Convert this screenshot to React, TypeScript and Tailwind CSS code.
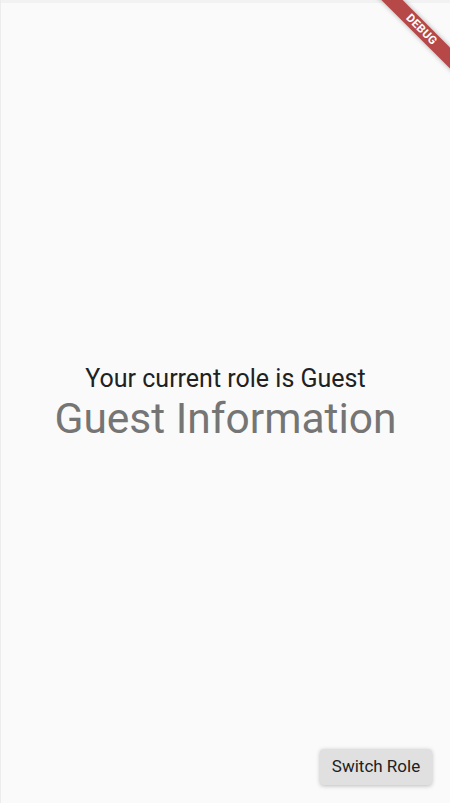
import React from "react";

export default function App() {
  return (
    <div
      className="relative w-[450px] h-[803px] overflow-hidden bg-[#fafafa] border-l border-[#ececec]"
      style={{ fontFamily: "Roboto, 'Noto Sans', sans-serif" }}
    >
      <div className="h-[3px] bg-[#f2f2f2]" />
      <div className="flex h-[800px] flex-col items-center justify-center">
        <div className="text-[25px] leading-[30px] text-[#212121]">Your current role is Guest</div>
        <div className="text-[42.5px] leading-[49px] text-[#757575]">Guest Information</div>
      </div>

      <button className="absolute right-[18px] bottom-[18px] h-[36px] w-[112px] rounded-[4px] bg-[#e0e0e0] text-[17px] text-[#212121] shadow-[0_1px_4px_rgba(0,0,0,0.25)]">
        Switch Role
      </button>

      <div className="absolute left-[360px] top-[21.5px] flex h-[15px] w-[121px] rotate-45 items-center justify-center bg-[#b74848] shadow-[0_0_5px_rgba(0,0,0,0.3)]">
        <span className="text-[11.5px] font-bold leading-none tracking-[0.3px] text-white">DEBUG</span>
      </div>
    </div>
  );
}
